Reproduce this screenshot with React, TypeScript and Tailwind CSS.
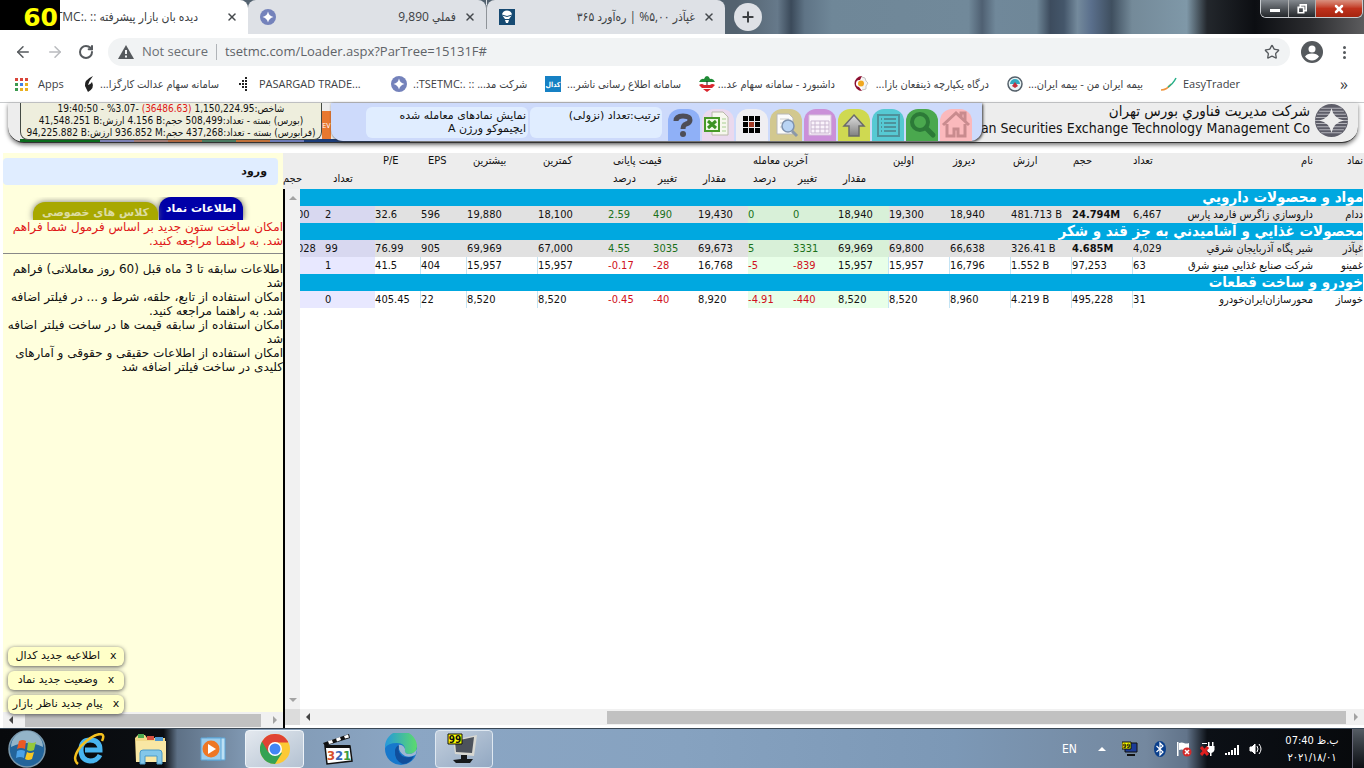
import type { ReactNode } from "react";
import { Star, X, Plus, RotateCw, ArrowLeft, ArrowRight } from "lucide-react";

type Row = {
  symbol: string;
  name: string;
  count: string;
  volume: string;
  value: string;
  yesterday: string;
  first: string;
  last: [string, string, string];
  close: [string, string, string];
  low: string;
  high: string;
  eps: string;
  pe: string;
  buyCount: string;
  buyVolume: string;
  shaded?: boolean;
};

const sections: { title: string; rows: Row[] }[] = [
  {
    title: "مواد و محصولات دارويي",
    rows: [
      {
        symbol: "ددام",
        name: "داروسازي زاگرس فارمد پارس",
        count: "6,467",
        volume: "24.794M",
        value: "481.713 B",
        yesterday: "18,940",
        first: "19,300",
        last: ["18,940", "0", "0"],
        close: ["19,430", "490", "2.59"],
        low: "18,100",
        high: "19,880",
        eps: "596",
        pe: "32.6",
        buyCount: "2",
        buyVolume: "10,000",
        shaded: true,
      },
    ],
  },
  {
    title: "محصولات غذايي و آشاميدني به جز قند و شكر",
    rows: [
      {
        symbol: "غپآذر",
        name: "شير پگاه آذربايجان شرقي",
        count: "4,029",
        volume: "4.685M",
        value: "326.41 B",
        yesterday: "66,638",
        first: "69,800",
        last: ["69,969", "3331", "5"],
        close: ["69,673", "3035", "4.55"],
        low: "67,000",
        high: "69,969",
        eps: "905",
        pe: "76.99",
        buyCount: "99",
        buyVolume: "126,028",
        shaded: true,
      },
      {
        symbol: "غمينو",
        name: "شركت صنايع غذايي مينو شرق",
        count: "63",
        volume: "97,253",
        value: "1.552 B",
        yesterday: "16,796",
        first: "15,957",
        last: ["15,957", "-839", "-5"],
        close: ["16,768", "-28", "-0.17"],
        low: "15,957",
        high: "15,957",
        eps: "404",
        pe: "41.5",
        buyCount: "1",
        buyVolume: "40",
      },
    ],
  },
  {
    title: "خودرو و ساخت قطعات",
    rows: [
      {
        symbol: "خوساز",
        name: "محورسازان‌ايران‌خودرو",
        count: "31",
        volume: "495,228",
        value: "4.219 B",
        yesterday: "8,960",
        first: "8,520",
        last: ["8,520", "-440", "-4.91"],
        close: ["8,920", "-40", "-0.45"],
        low: "8,520",
        high: "8,520",
        eps: "22",
        pe: "405.45",
        buyCount: "0",
        buyVolume: "0",
      },
    ],
  },
];

const signColor = (v: string) => (v.startsWith("-") ? "text-[#d01020]" : "text-[#1a701a]");

function Diamond({ className }: { className: string }) {
  return (
    <svg viewBox="0 0 16 16" className={className}>
      <circle cx="8" cy="8" r="8" fill="#7482bb" />
      <path d="M8 2.5Q9 7 13.500 8Q9 9 8 13.500Q7 9 2.500 8Q7 7 8 2.500Z" fill="#fff" />
    </svg>
  );
}

function Tab({ icon, title, active }: { icon?: ReactNode; title: string; active?: boolean }) {
  return (
    <div
      className={`flex h-full items-center rounded-t-lg pr-[10px] text-xs ${
        active ? "w-[248px] gap-7 bg-white" : "w-[238px] gap-2 bg-[#dee1e6] pl-3"
      }`}
    >
      {icon}
      <span dir={active ? "ltr" : "rtl"} className="ml-auto whitespace-nowrap text-[#3c4043]">
        {title}
      </span>
      <button aria-label="Close tab">
        <X className="size-3" strokeWidth={3} color="#45494d" />
      </button>
    </div>
  );
}

function WindowChrome() {
  return (
    <div className="relative flex h-[34px] bg-[linear-gradient(90deg,#53626f_0%,#53626f_54%,#66798a_57%,#3b4a5a_58%,#5f7486_59%,#6f8798_61%,#71899a_71%,#4f6072_72%,#70889a_73%,#6f8798_76%,#3d4c5e_77%,#44566a_78%,#748a9c_79%,#5a6f8c_80%,#3f4f5f_81.500%,#748a99_83%,#7f98a8_87%,#23272c_88.500%,#0c0e12_92%,#2a2b2e_96%,#5c5c5e_100%)]">
      <Tab active title="TSETMC:. :: دیده بان بازار پیشرفته" />
      <Tab icon={<Diamond className="size-4" />} title="فملي 9,890" />
      <div className="flex items-center bg-[#dee1e6]">
        <span className="h-6 w-px bg-[#8f9499]" />
      </div>
      <Tab
        icon={
          <svg viewBox="0 0 16 16" className="size-4">
            <path d="M0 0h16v16H0z" fill="#164a72" />
            <path d="M3 6a5 4.500 0 0 1 10 0L10 10H6ZM6 11h4l-1 3H7Z" fill="#fff" />
            <path d="M3 6q5 3 10 0" stroke="#164a72" fill="none" />
          </svg>
        }
        title="غپآذر ۵,۰۰% | ره‌آورد ۳۶۵"
      />
      <button
        aria-label="New tab"
        className="mt-[3px] ml-[9px] flex size-7 items-center justify-center rounded-full bg-[#dee1e6]"
      >
        <Plus className="size-4" strokeWidth={3} color="#3c4043" />
      </button>
      <div className="mr-px ml-auto flex h-[18px] overflow-hidden rounded-b-md border border-t-0 border-[#c9ccd0]">
        <button
          aria-label="Minimize"
          className="flex w-7 items-center justify-center border-r border-[#b0b0b0] bg-linear-to-b from-[#858a90] to-[#24272b]"
        >
          <span className="mt-1 h-[3px] w-[10px] bg-white" />
        </button>
        <button
          aria-label="Restore"
          className="flex w-[27px] items-center justify-center border-r border-[#b0b0b0] bg-linear-to-b from-[#858a90] to-[#24272b]"
        >
          <svg viewBox="0 0 12 12" className="size-[10px]" fill="none" stroke="#fff" strokeWidth="2">
            <path d="M4 3V1h7v7H9M1.500 4h6.500v6.500H1.500Z" />
          </svg>
        </button>
        <button
          aria-label="Close window"
          className="flex w-[46px] items-center justify-center bg-linear-to-b from-[#d9907f] via-[#c0321c] to-[#a52510]"
        >
          <X className="size-3" strokeWidth={5} color="#fff" />
        </button>
      </div>
      <div className="absolute top-0 left-0 flex h-[30px] w-[60px] items-end justify-end bg-black pr-[2px] font-['DejaVu_Sans',sans-serif] text-[25px] leading-6 font-bold text-[#ff0]">
        60
      </div>
    </div>
  );
}

function AddressBar() {
  return (
    <div className="flex h-9 items-center bg-white pr-[18px] pl-[14px]">
      <button aria-label="Back">
        <ArrowLeft className="size-[18px]" color="#55595d" />
      </button>
      <button aria-label="Forward" className="ml-[14px]">
        <ArrowRight className="size-[18px]" color="#b9bbbe" />
      </button>
      <button aria-label="Reload" className="ml-[14px]">
        <RotateCw className="size-4" strokeWidth={3} color="#55595d" />
      </button>
      <div className="ml-[14px] flex h-7 flex-1 items-center rounded-full bg-[#f1f3f4] px-[10px] text-[13px]">
        <svg viewBox="0 0 16 14" className="h-[14px] w-4">
          <path d="M8 0 16 14H0Z" fill="#55595d" />
          <path d="M7 5h2v4H7zM7 10.500h2v2H7z" fill="#f1f3f4" />
        </svg>
        <span className="ml-2 whitespace-nowrap text-[#6a6e73]">Not secure</span>
        <span className="mx-2 h-4 w-px bg-[#b0b4b8]" />
        <label htmlFor="url" className="sr-only">
          Address
        </label>
        <div className="relative flex-1">
          <input
            id="url"
            className="w-full bg-transparent text-[#5f6368] outline-none"
            defaultValue="tsetmc.com/Loader.aspx?ParTree=15131F#"
          />
        </div>
        <Star className="size-4" color="#55595d" />
      </div>
      <svg viewBox="0 0 22 22" className="ml-[11px] size-[22px]">
        <circle cx="11" cy="11" r="11" fill="#55595d" />
        <circle cx="11" cy="8" r="3.500" fill="#fff" />
        <path d="M4 15.500q2-3 7-3t7 3q-3 4-7 4t-7-4Z" fill="#fff" />
      </svg>
      <button aria-label="Menu" className="ml-5 flex flex-col gap-[2px]">
        <span className="size-[3px] rounded-full bg-[#55595d]" />
        <span className="size-[3px] rounded-full bg-[#55595d]" />
        <span className="size-[3px] rounded-full bg-[#55595d]" />
      </button>
    </div>
  );
}

const bookmarks: { title: string; rtl?: boolean; icon: ReactNode }[] = [
  {
    title: "سامانه سهام عدالت کارگزا...",
    rtl: true,
    icon: <path d="M10 0Q1 4 2 10l3 6Q12 12 9 6q-2 3-4 3Q6 5 10 0Z" fill="#222" />,
  },
  {
    title: "PASARGAD TRADE...",
    icon: (
      <path
        d="M2 7h2v2H2zM5 7h2v2H5zM5 4h2v2H5zM8 7h2v2H8zM8 4h2v2H8zM8 1h2v2H8zM8 10h2v2H8zM8 13h2v2H8zM5 10h2v2H5z"
        fill="#222"
      />
    ),
  },
  {
    title: ".:TSETMC:. :: ...شرکت مد",
    icon: (
      <>
        <circle cx="8" cy="8" r="8" fill="#7482bb" />
        <path d="M8 2.500Q9 7 13.500 8Q9 9 8 13.500Q7 9 2.500 8Q7 7 8 2.500Z" fill="#fff" />
      </>
    ),
  },
  {
    title: "سامانه اطلاع رسانی ناشر...",
    rtl: true,
    icon: (
      <>
        <path d="M0 0h16v16H0z" fill="#1681c4" />
        <text x="8" y="11" fontSize="7" fontWeight="700" textAnchor="middle" fill="#fff">
          کدال
        </text>
      </>
    ),
  },
  {
    title: "داشبورد - سامانه سهام عد...",
    rtl: true,
    icon: (
      <>
        <path d="M0 6Q2 2 5 3q1-3 3-3t3 3q3-1 5 3Z" fill="#1f8a36" />
        <path d="M7.500 5h1v7h-1z" fill="#222" />
        <path d="M0 9q3-2 5 0h6q2-2 5 0l-3 3H3ZM4 13h8l-4 3Z" fill="#d9262e" />
      </>
    ),
  },
  {
    title: "درگاه یکپارچه ذینفعان بازا...",
    rtl: true,
    icon: (
      <>
        <path d="M9 1l3 1 1 3 2 2-2 3 0 3-4 1" fill="#f4f4f4" stroke="#c4c4c4" />
        <path d="M9 0a7 7 0 0 0 0 15L6 11a3.500 3.500 0 0 1 1-7Z" fill="#8c1030" />
        <circle cx="8" cy="7.500" r="3" fill="#f0a820" />
      </>
    ),
  },
  {
    title: "بیمه ایران من - بیمه ایران...",
    rtl: true,
    icon: (
      <>
        <circle cx="8" cy="8" r="7" fill="#e9f4f6" stroke="#55606a" strokeWidth="1.500" />
        <path d="M3 8a5 5 0 0 1 10 0Z" fill="#32a9c0" />
        <path d="M5 10l3-4 3 4-3 2Z" fill="#c2303c" />
      </>
    ),
  },
  {
    title: "EasyTrader",
    icon: (
      <>
        <path d="M0 14q6 0 10-6" fill="none" stroke="#f0943c" strokeWidth="1.500" />
        <path d="M7 11q5-3 8-9" fill="none" stroke="#27b08a" strokeWidth="1.500" />
      </>
    ),
  },
];

const appDots = [
  "bg-[#d9453a]", "bg-[#d9453a]", "bg-[#d9453a]",
  "bg-[#3c9a50]", "bg-[#4080e8]", "bg-[#eab020]",
  "bg-[#3c9a50]", "bg-[#eab020]", "bg-[#eab020]",
];

function BookmarksBar() {
  return (
    <nav className="flex h-[33px] items-center overflow-hidden border-b border-[#c8cacc] bg-white pb-1 pl-[15px] text-[11px] text-[#3c4043]">
      <a href="#" className="flex w-[68px] shrink-0 items-center gap-[10px]">
        <span className="grid grid-cols-3 gap-[2px]">
          {appDots.map((dot, i) => (
            <span key={i} className={`size-[3px] ${dot}`} />
          ))}
        </span>
        Apps
      </a>
      {bookmarks.map((b) => (
        <a key={b.title} href="#" className="flex w-[154px] shrink-0 items-center gap-[6px]">
          <svg viewBox="0 0 16 16" className="size-4 shrink-0">
            {b.icon}
          </svg>
          <span dir={b.rtl ? "rtl" : "ltr"} className="w-[114px] whitespace-nowrap">
            {b.title}
          </span>
        </a>
      ))}
      <span className="ml-auto pr-4 text-base">»</span>
    </nav>
  );
}

const tools: { label: string; bg: string; icon: ReactNode }[] = [
  {
    label: "Help",
    bg: "bg-[#8fb0f7]",
    icon: (
      <>
        <path d="M8 12q0-5 7-5t7 4q0 3-4 4-3 1-3 5" fill="none" stroke="#4d4d57" strokeWidth="5" />
        <circle cx="15" cy="25" r="3" fill="#4d4d57" />
      </>
    ),
  },
  {
    label: "Excel",
    bg: "bg-[#ead9ee]",
    icon: (
      <>
        <path d="M10 3h11l5 5v18H10Z" fill="#f7f7ee" stroke="#b9b9a8" />
        <path d="M20 10h4M20 14h4M20 18h4M20 22h4" stroke="#a8cf90" />
        <path d="M3 9h14v13H3Z" fill="#f1fae8" stroke="#489a28" strokeWidth="2" />
        <path d="M6 12l8 7M14 12l-8 7" stroke="#3b9422" strokeWidth="3" />
      </>
    ),
  },
  {
    label: "Grid",
    bg: "bg-[#efeef2]",
    icon: (
      <>
        <path
          d="M7 7h5v5H7zM13 7h5v5h-5zM19 7h5v5h-5zM7 13h5v5H7zM19 13h5v5h-5zM7 19h5v5H7zM13 19h5v5h-5zM19 19h5v5h-5z"
          fill="#000"
        />
        <path d="M13 13h5v5h-5z" fill="#a33a26" />
      </>
    ),
  },
  {
    label: "Preview",
    bg: "bg-[#d2c88f]",
    icon: (
      <>
        <path d="M7 5h12l4 4v16H7Z" fill="#fbfbfb" stroke="#b8b8b8" />
        <path d="M10 10h9M10 14h9M10 18h9" stroke="#ccc" />
        <circle cx="18" cy="17" r="6" fill="#b9d4f4" stroke="#7f93b0" strokeWidth="1.500" />
        <path d="M22 22l5 5" stroke="#8b98a8" strokeWidth="3" />
      </>
    ),
  },
  {
    label: "Calendar",
    bg: "bg-[#cb90d9]",
    icon: (
      <>
        <path d="M5 6h22v20H5Z" fill="#faf3fb" stroke="#d5c5da" />
        <path
          d="M7 12h18v12H7ZM7 16h18M7 20h18M11 12v12M16 12v12M21 12v12"
          fill="none"
          stroke="#c9b7d0"
        />
      </>
    ),
  },
  {
    label: "Upload",
    bg: "bg-[#cfd951]",
    icon: (
      <>
        <defs>
          <linearGradient id="upload" x2="0" y2="1">
            <stop offset="0" stopColor="#e0e0e0" />
            <stop offset="1" stopColor="#808080" />
          </linearGradient>
        </defs>
        <path d="M16 6l10 11h-5v10H11V17H6Z" fill="url(#upload)" stroke="#6b6b6b" strokeWidth="1.500" />
      </>
    ),
  },
  {
    label: "List",
    bg: "bg-[#56c9d3]",
    icon: (
      <path
        d="M6 6h21v21H6ZM9 10h1M12 10h12M9 14h1M12 14h12M9 18h1M12 18h12M9 22h1M12 22h12"
        fill="none"
        stroke="#4e929b"
        strokeWidth="2"
      />
    ),
  },
  {
    label: "Search",
    bg: "bg-[#4aa84e]",
    icon: (
      <>
        <circle cx="14" cy="13" r="8" fill="none" stroke="#2c7a38" strokeWidth="4" />
        <path d="M20 19l7 7" stroke="#2c7a38" strokeWidth="5" strokeLinecap="round" />
      </>
    ),
  },
  {
    label: "Home",
    bg: "bg-[#fbb9bc]",
    icon: (
      <path
        d="M3 16L16 4l13 12M21 8V4h4v8M7 15v12h7v-7h4v7h7V15"
        fill="none"
        stroke="#c98b8e"
        strokeWidth="3"
      />
    ),
  },
];

function SiteHeader() {
  return (
    <header className="h-[50px] bg-white px-[6px] pl-2">
      <div className="relative flex h-10 rounded-b-2xl border-b border-[#333] bg-[#ededed] shadow-[0_2px_4px_#777]">
        <div className="absolute bottom-0 left-3 flex h-[3px] w-[390px]">
          <span className="w-20 bg-[#0b6b1b]" />
          <span className="w-[34px] bg-[#7c80b4]" />
          <span className="w-[34px] bg-[#a07a74]" />
          <span className="w-[34px] bg-[#b06840]" />
          <span className="w-[34px] bg-[#4a7a60]" />
          <span className="w-[34px] bg-[#c07038]" />
          <span className="w-[34px] bg-[#6d7bb8]" />
          <span className="flex-1 bg-[#1c3c78]" />
        </div>
        <div
          dir="rtl"
          className="relative ml-3 h-[37px] w-[302px] shrink-0 rounded-b-lg border border-t-0 border-[#444a44] bg-[#eeeedd] text-center text-[10px] leading-3 whitespace-nowrap"
        >
          <p>
            شاخص:1,150,224.95 <span className="text-[#e01818]">(36486.63)</span> -3.07% - 19:40:50
          </p>
          <p>
            (بورس) بسته - تعداد:508,499 حجم:<bdi dir="ltr">4.156 B</bdi> ارزش:
            <bdi dir="ltr">41,548.251 B</bdi>
          </p>
          <p>
            (فرابورس) بسته - تعداد:437,268 حجم:<bdi dir="ltr">936.852 M</bdi> ارزش:
            <bdi dir="ltr">94,225.882 B</bdi>
          </p>
        </div>
        <div className="mt-2 flex w-[9px] items-center justify-center overflow-hidden bg-[#e87830] text-[7px] text-white">
          EV
        </div>
        <div className="relative flex h-[38px] w-[651px] shrink-0 justify-end gap-[2px] rounded-b-xl bg-[#cddafb] pr-[10px] font-['DejaVu_Sans',sans-serif] shadow-[1px_1px_3px_#333]">
          <div
            dir="rtl"
            className="mt-1 h-[31px] w-[162px] rounded-md bg-[#e0edff] pt-[2px] pr-[2px] text-[11px] leading-[13px]"
          >
            نمایش نمادهای معامله شده
            <br />
            ایچیموکو ورژن A
          </div>
          <div
            dir="rtl"
            className="mt-1 mr-1 h-[31px] w-[132px] rounded-md bg-[#e0edff] pt-[2px] pr-[2px] text-[11px] leading-[13px]"
          >
            ترتیب:تعداد (نزولی)
          </div>
          {tools.map((t) => (
            <button key={t.label} aria-label={t.label} className={`mt-[6px] h-8 w-8 rounded-t-xl ${t.bg}`}>
              <svg viewBox="0 0 32 32" className="size-8">
                {t.icon}
              </svg>
            </button>
          ))}
        </div>
        <div dir="rtl" className="flex min-w-0 flex-1 gap-1 pr-[9px]">
          <svg viewBox="0 0 34 34" className="size-[35px] shrink-0">
            <circle cx="17" cy="17" r="16" fill="#5d5d68" />
            <path
              d="M7 5h20M5 8h24M3 11h28M2 14h30M1 17h32M2 20h30M3 23h28M5 26h24M7 29h20"
              stroke="#b4b4ba"
            />
            <path d="M17 5Q19 15 29 17Q19 19 17 29Q15 19 5 17Q15 15 17 5Z" fill="#ededed" />
          </svg>
          <div className="min-w-0 flex-1 overflow-hidden leading-[17px] whitespace-nowrap">
            <p className="text-[15px]">شركت مديريت فناوري بورس تهران</p>
            <p className="text-sm leading-[17px]">
              <bdi dir="ltr">Tehran Securities Exchange Technology Management Co</bdi>
            </p>
          </div>
        </div>
      </div>
    </header>
  );
}

function Arrow({ dir, color = "#a3a3a3" }: { dir: "up" | "down" | "left" | "right"; color?: string }) {
  const paths = { up: "M0 6l4-4 4 4Z", down: "M0 2l4 4 4-4Z", left: "M6 0v8L2 4Z", right: "M2 0v8l4-4Z" };
  return (
    <svg viewBox="0 0 8 8" className="size-2 shrink-0">
      <path d={paths[dir]} fill={color} />
    </svg>
  );
}

const notices = ["اطلاعیه جدید کدال", "وضعیت جدید نماد", "پیام جدید ناظر بازار"];

function Sidebar() {
  return (
    <aside className="relative flex w-[283px] shrink-0 flex-col pl-[3px] font-['DejaVu_Sans',sans-serif]">
      <div dir="rtl" className="flex-1 bg-[#ffffdd] pt-[5px] text-xs leading-[14px]">
        <div className="mr-[5px] flex h-[27px] items-center rounded-sm bg-[#e0edff] px-[11px] text-[11px]">
          <a href="#" className="font-bold">
            ورود
          </a>
        </div>
        <div className="mt-3 flex h-[23px] items-end gap-px overflow-hidden pr-10 text-[11px] font-bold whitespace-nowrap">
          <button className="h-[23px] w-[84px] rounded-t-xl bg-[#0000a8] text-white shadow-[0_0_6px_#555]">
            اطلاعات نماد
          </button>
          <button className="h-[18px] w-[125px] rounded-t-xl bg-[#a8a800] pt-1 text-[#dcdca0] shadow-[0_0_6px_#777]">
            کلاس های خصوصی
          </button>
        </div>
        <p className="whitespace-nowrap text-[#e01818]">
          امکان ساخت ستون جدید بر اساس فرمول شما فراهم
          <br />
          شد. به راهنما مراجعه کنید.
        </p>
        <hr className="mt-[5px] mb-2 border-[#888]" />
        <p className="whitespace-nowrap">
          اطلاعات سابقه تا 3 ماه قبل (60 روز معاملاتی) فراهم
          <br />
          شد
        </p>
        <p className="whitespace-nowrap">
          امکان استفاده از تابع، حلقه، شرط و ... در فیلتر اضافه
          <br />
          شد. به راهنما مراجعه کنید.
        </p>
        <p className="whitespace-nowrap">
          امکان استفاده از سابقه قیمت ها در ساخت فیلتر اضافه
          <br />
          شد
        </p>
        <p className="whitespace-nowrap">
          امکان استفاده از اطلاعات حقیقی و حقوقی و آمارهای
          <br />
          کلیدی در ساخت فیلتر اضافه شد
        </p>
      </div>
      <div className="flex h-4 items-center gap-[10px] bg-[#f1f1f1] px-1">
        <Arrow dir="left" color="#444" />
        <span className="h-[13px] flex-1 bg-[#c1c1c1]" />
        <Arrow dir="right" />
      </div>
      <div className="absolute bottom-[14px] left-2 flex flex-col gap-[5px]">
        {notices.map((n) => (
          <div
            key={n}
            dir="rtl"
            className="flex h-[19px] w-[116px] items-center justify-center gap-[10px] rounded-md bg-[#ffffc8] text-[11px] whitespace-nowrap shadow-[0_1px_4px_#555]"
          >
            <button aria-label="بستن">x</button>
            {n}
          </div>
        ))}
      </div>
    </aside>
  );
}

function HeadCell({ top, bottom }: { top?: string; bottom?: string }) {
  return (
    <th dir="ltr" className="p-0 text-left font-normal whitespace-nowrap">
      <span className="block h-[18px] pt-px pl-px">{top}</span>
      <span className="block h-[18px] pt-px pl-px">{bottom}</span>
    </th>
  );
}

function MarketHead() {
  return (
    <div dir="rtl" className="overflow-hidden bg-[#ededed] pr-px">
      <table className="w-full min-w-[1081px] table-fixed text-[11px] leading-[14px]">
        <colgroup>
          <col className="w-[50px]" />
          <col />
          <col className="w-[45px]" />
          <col className="w-[60px]" />
          <col className="w-[60px]" />
          <col className="w-[60px]" />
          <col className="w-[60px]" />
          <col className="w-[50px]" />
          <col className="w-[45px]" />
          <col className="w-[45px]" />
          <col className="w-[50px]" />
          <col className="w-[45px]" />
          <col className="w-[45px]" />
          <col className="w-[70px]" />
          <col className="w-[70px]" />
          <col className="w-[45px]" />
          <col className="w-[45px]" />
          <col className="w-[50px]" />
          <col className="w-[50px]" />
        </colgroup>
        <thead>
          <tr>
            <th className="p-0 pt-px text-right align-top font-normal">نماد</th>
            <th className="p-0 pt-px text-right align-top font-normal">نام</th>
            <HeadCell top="تعداد" />
            <HeadCell top="حجم" />
            <HeadCell top="ارزش" />
            <HeadCell top="دیروز" />
            <HeadCell top="اولین" />
            <HeadCell bottom="مقدار" />
            <HeadCell bottom="تغییر" />
            <HeadCell top="آخرین معامله" bottom="درصد" />
            <HeadCell bottom="مقدار" />
            <HeadCell bottom="تغییر" />
            <HeadCell top="قیمت پایانی" bottom="درصد" />
            <HeadCell top="کمترین" />
            <HeadCell top="بیشترین" />
            <HeadCell top="EPS" />
            <HeadCell top="P/E" />
            <HeadCell bottom="تعداد" />
            <HeadCell bottom="حجم" />
          </tr>
        </thead>
      </table>
    </div>
  );
}

function Cell({ children, className }: { children: ReactNode; className: string }) {
  return (
    <td dir="ltr" className={`border-l p-0 text-left whitespace-nowrap ${className}`}>
      {children}
    </td>
  );
}

function MarketRow({ row }: { row: Row }) {
  const line = row.shaded ? "border-transparent" : "border-[#c4e4f4]";
  const green = row.shaded ? "border-transparent bg-[#d8f0d8]" : "border-transparent bg-[#e8ffe8]";
  const lilac = row.shaded ? "border-transparent bg-[#d8d8f0]" : "border-transparent bg-[#e8e8ff]";
  return (
    <tr className={row.shaded ? "h-[17px] bg-[#e1e1e1]" : "h-[17px] bg-white"}>
      <td className="p-0">{row.symbol}</td>
      <td className="overflow-hidden p-0 whitespace-nowrap">{row.name}</td>
      <Cell className={line}>{row.count}</Cell>
      <Cell className={row.volume.endsWith("M") ? `${line} font-bold` : line}>{row.volume}</Cell>
      <Cell className={line}>{row.value}</Cell>
      <Cell className={line}>{row.yesterday}</Cell>
      <Cell className={line}>{row.first}</Cell>
      <Cell className={green}>{row.last[0]}</Cell>
      <Cell className={`${green} ${signColor(row.last[1])}`}>{row.last[1]}</Cell>
      <Cell className={`${green} ${signColor(row.last[2])}`}>{row.last[2]}</Cell>
      <Cell className="border-transparent">{row.close[0]}</Cell>
      <Cell className={`border-transparent ${signColor(row.close[1])}`}>{row.close[1]}</Cell>
      <Cell className={`border-transparent ${signColor(row.close[2])}`}>{row.close[2]}</Cell>
      <Cell className={line}>{row.low}</Cell>
      <Cell className={line}>{row.high}</Cell>
      <Cell className={line}>{row.eps}</Cell>
      <Cell className="border-transparent">{row.pe}</Cell>
      <Cell className={lilac}>{row.buyCount}</Cell>
      <Cell className={lilac}>{row.buyVolume}</Cell>
    </tr>
  );
}

function MarketTable() {
  return (
    <div dir="rtl" className="min-w-0 flex-1 overflow-hidden bg-white pr-px">
      <table className="w-full min-w-[1089px] table-fixed text-[11px] leading-[17px]">
        <colgroup>
          <col className="w-[50px]" />
          <col />
          <col className="w-[45px]" />
          <col className="w-[61px]" />
          <col className="w-[61px]" />
          <col className="w-[61px]" />
          <col className="w-[61px]" />
          <col className="w-[51px]" />
          <col className="w-[45px]" />
          <col className="w-[45px]" />
          <col className="w-[50px]" />
          <col className="w-[45px]" />
          <col className="w-[45px]" />
          <col className="w-[70px]" />
          <col className="w-[71px]" />
          <col className="w-[46px]" />
          <col className="w-[46px]" />
          <col className="w-[50px]" />
          <col className="w-[50px]" />
        </colgroup>
        {sections.map((s) => (
          <tbody key={s.title}>
            <tr className="h-[17px] bg-[#00a8e0]">
              <th colSpan={19} className="p-0 text-right text-[15px] leading-[17px] font-bold text-white">
                {s.title}
              </th>
            </tr>
            {s.rows.map((r) => (
              <MarketRow key={r.symbol} row={r} />
            ))}
          </tbody>
        ))}
      </table>
    </div>
  );
}

function Taskbar() {
  return (
    <footer className="flex h-10 items-center border-t border-[#3a4856] bg-[linear-gradient(90deg,#07090c_0%,#0b0e12_12%,#5e7186_13%,#8098b2_18%,#8ba6c4_30%,#86a2c0_50%,#7c98b6_70%,#74889f_84%,#62748a_87%,#0c1016_88.500%,#07090c_100%)] text-white">
      <button aria-label="Start" className="flex w-[58px] shrink-0 items-center justify-center pr-1">
        <svg viewBox="0 0 38 38" className="size-[38px]">
          <circle cx="19" cy="19" r="18" fill="#23649a" stroke="#7a98ac" strokeWidth="1.500" />
          <path d="M3 17a16 16 0 0 1 32 0q-16-8-32 0Z" fill="#93b4c8" />
          <path d="M11 11q4-2 7 0l-1 8q-4-2-8 0Z" fill="#ea5a24" />
          <path d="M20 12q4 2 8 0l-2 8q-4 2-7 0Z" fill="#94c83c" />
          <path d="M9 21q4-2 8 0l-1 7q-4-2-8 0Z" fill="#4ba2e8" />
          <path d="M19 22q3 2 7 0l-2 7q-4 2-7 0Z" fill="#f8c824" />
        </svg>
      </button>
      <button aria-label="Internet Explorer" className="flex w-[62px] shrink-0 justify-center">
        <svg viewBox="0 0 32 32" className="size-8" fill="none">
          <path d="M27 22q-3 6-10 6-9-1-9-11t9-10q10 0 10 10H12" stroke="#49b5f0" strokeWidth="5" />
          <path d="M5 31Q-2 26 8 13 20 1 28 1q4 1 1 7" stroke="#f4c01e" strokeWidth="2.500" />
        </svg>
      </button>
      <button aria-label="Explorer" className="flex w-[62px] shrink-0 justify-center">
        <svg viewBox="0 0 32 32" className="size-8">
          <path d="M0 5l3-3h7l2 3h18v24H1Z" fill="#f2d988" />
          <path d="M3 1h6v4H3z" fill="#4da850" />
          <path d="M12 3h7v4h-7z" fill="#d85040" />
          <path d="M20 4h8v4h-8z" fill="#5098d0" />
          <path d="M1 8h30v21H1Z" fill="#f9e7a4" />
          <path d="M5 31V20q0-3 3-3h16q3 0 3 3v11h-5v-8H10v8Z" fill="#83c7ea" stroke="#4b9ac8" />
        </svg>
      </button>
      <button aria-label="Media Player" className="flex w-[62px] shrink-0 justify-center">
        <svg viewBox="0 0 28 28" className="size-7">
          <path d="M8 3h18v22H8Z" fill="#bce0f4" stroke="#5ca6d8" />
          <path d="M2 3h20v22H2Z" fill="#9ccdec" stroke="#5ca6d8" />
          <circle cx="12" cy="14" r="8.500" fill="#ee7724" />
          <path d="M9 9l8 5-8 5Z" fill="#fff" />
        </svg>
      </button>
      <button
        aria-label="Chrome"
        className="mx-px flex h-[38px] w-[59px] shrink-0 items-center justify-center rounded-sm border border-[#eef3f8] bg-linear-to-br from-[#e4e9ef] to-[#b4c2d2]"
      >
        <svg viewBox="0 0 30 30" className="size-[30px]">
          <circle cx="15" cy="15" r="15" fill="#fcc934" />
          <path d="M15 15 2 7.500A15 15 0 0 0 15 30l7-11Z" fill="#35a253" />
          <path d="M2 7.500A15 15 0 0 1 28 7.500L28 8.500H15L8.500 18.500Z" fill="#e04334" />
          <circle cx="15" cy="15" r="7" fill="#fff" />
          <circle cx="15" cy="15" r="5.500" fill="#4285f4" />
        </svg>
      </button>
      <button aria-label="Media Player Classic" className="flex w-[66px] shrink-0 justify-center">
        <svg viewBox="0 0 32 32" className="size-8">
          <path d="M1 10l26-9 1 4L3 13Z" fill="#111" />
          <path d="M6 8l4-1 1 3-4 1ZM14 5.500l4-1.500 1 3-4 1.500ZM22 3l4-1.500 1 3-4 1Z" fill="#fff" />
          <path d="M3 13h25l2 15-25 3Z" fill="#fff" stroke="#111" strokeWidth="1.500" />
          <path d="M3 12h25v3H3Z" fill="#111" />
          <g fontSize="13" fontWeight="700">
            <text x="5" y="27" fill="#d8502c">3</text>
            <text x="13" y="27" fill="#3868b8">2</text>
            <text x="21" y="27" fill="#3c9c3c">1</text>
          </g>
        </svg>
      </button>
      <button aria-label="Edge" className="flex w-[60px] shrink-0 justify-center">
        <svg viewBox="0 0 32 32" className="size-8">
          <defs>
            <linearGradient id="edge-top">
              <stop offset="0" stopColor="#2598dc" />
              <stop offset="1" stopColor="#5cdb6c" />
            </linearGradient>
          </defs>
          <circle cx="16" cy="16" r="16" fill="#1778cc" />
          <path d="M0 15A16 16 0 0 1 32 13q0 8-8 8-5 0-4-4 0-7-8-7Q3 10 0 15Z" fill="url(#edge-top)" />
          <path d="M13 12q5-1 7 4-1 5 4 5 5 0 8-5-1 6-2 6-5 3-10 1-6-3-7-11Z" fill="#9db6d2" />
          <path d="M10 17q1-4 4-5-2 10 6 12 5 1 9-1-4 8-11 8-9-3-8-14Z" fill="#104f9c" />
        </svg>
      </button>
      <button
        aria-label="Fraps"
        className="mx-1 flex h-[38px] w-[58px] shrink-0 items-center justify-center rounded-sm border border-[#dfe8f1] bg-linear-to-br from-[#c3cfdd] to-[#92a8c2]"
      >
        <svg viewBox="0 0 34 34" className="size-[34px]">
          <path d="M6 8l24-5-3 21-19-2Z" fill="#d8d8d2" />
          <path d="M8 9l19-4-2 16-16-1Z" fill="#4c525c" />
          <path d="M14 23h6v4h6l-3 4H9l-3-3 8-1Z" fill="#16181a" />
          <path d="M1 2h14v10H1Z" fill="#ff0" stroke="#111" />
          <text x="8" y="11" fontSize="10" fontWeight="700" textAnchor="middle" fill="#111">
            99
          </text>
        </svg>
      </button>
      <div className="ml-auto flex items-center text-[11px]">
        <span className="w-7 text-xs">EN</span>
        <svg viewBox="0 0 8 4" className="mr-4 ml-2 h-1 w-2">
          <path d="M0 4l4-4 4 4Z" fill="#fff" />
        </svg>
        <svg viewBox="0 0 16 16" className="mr-[14px] size-4">
          <path d="M3 2h12v9H3Z" fill="#1c3c98" stroke="#111" />
          <path d="M5 13h8v2H5z" fill="#111" />
          <path d="M0 1h9v7H0Z" fill="#ff0" stroke="#111" />
          <text x="4.500" y="7" fontSize="6" fontWeight="700" textAnchor="middle" fill="#111">
            99
          </text>
        </svg>
        <svg viewBox="0 0 16 16" className="mr-2 size-4">
          <ellipse cx="8" cy="8" rx="6" ry="8" fill="#0a3f8c" />
          <path d="M4.500 5l6.500 6-3 3V2l3 3-6.500 6" fill="none" stroke="#fff" strokeWidth="1.200" />
        </svg>
        <svg viewBox="0 0 16 16" className="mr-2 size-4">
          <path d="M1 1h1.500v14H1zM3 2q3-1 5 0t5 0v7q-3 1-5 0T3 9Z" fill="#fff" />
          <circle cx="11" cy="11" r="4.500" fill="#d42a2a" />
          <path d="M9 9l4 4M13 9l-4 4" stroke="#fff" strokeWidth="1.500" />
        </svg>
        <svg viewBox="0 0 16 16" className="mr-2 size-4">
          <path d="M8 1h1.500v4H12V1h1.500v4h1v4q-1 3-3 3v3H10v-3Q7 11 7 9V5h1ZM2 2h5v1H2z" fill="#fff" />
          <path d="M1 6l7 8M8 6l-7 8" stroke="#e02020" strokeWidth="3" />
        </svg>
        <svg viewBox="0 0 16 16" className="mr-2 size-4">
          <path d="M1 12h2v2H1zM4 11h2v3H4zM7 9h2v5H7zM10 7h2v7h-2zM13 4h2v10h-2z" fill="#fff" />
        </svg>
        <svg viewBox="0 0 16 16" className="mr-4 size-4" fill="none" stroke="#fff">
          <path d="M2 6h2l3-3v10l-3-3H2Z" fill="#fff" />
          <path d="M9 5q2 3 0 6M11 3q4 5 0 10" />
        </svg>
        <div dir="rtl" className="w-16 text-center leading-[17px] whitespace-nowrap">
          <p>ب.ظ 07:40</p>
          <p dir="ltr">۲۰۲۱/۱۸/۰۱</p>
        </div>
        <button
          aria-label="Show desktop"
          className="ml-2 h-10 w-3 border-l border-[#667] bg-linear-to-b from-[#555c64] to-[#0b0e12]"
        />
      </div>
    </footer>
  );
}

export default function App() {
  return (
    <div className="flex min-h-screen flex-col overflow-hidden bg-white font-['DejaVu_Sans_Condensed','DejaVu_Sans',sans-serif] text-[#111]">
      <div className="font-['Open_Sans','DejaVu_Sans_Condensed',sans-serif]">
        <WindowChrome />
        <AddressBar />
        <BookmarksBar />
      </div>
      <SiteHeader />
      <main className="flex flex-1">
        <Sidebar />
        <section className="flex min-w-0 flex-1 flex-col">
          <MarketHead />
          <div className="flex flex-1 border-l-2 border-black">
            <div className="flex w-[15px] shrink-0 flex-col items-center justify-between bg-[#f1f1f1] py-[5px]">
              <Arrow dir="up" />
              <Arrow dir="down" />
            </div>
            <MarketTable />
          </div>
          <div className="flex h-[19px] border-l-2 border-black">
            <span className="h-4 w-[15px] bg-[#dcdcdc]" />
            <div className="flex h-4 flex-1 items-center bg-[#f1f1f1] px-1">
              <Arrow dir="left" color="#444" />
              <span className="mr-[6px] ml-auto h-[13px] w-[70%] bg-[#c1c1c1]" />
              <Arrow dir="right" />
            </div>
          </div>
        </section>
      </main>
      <Taskbar />
    </div>
  );
}
